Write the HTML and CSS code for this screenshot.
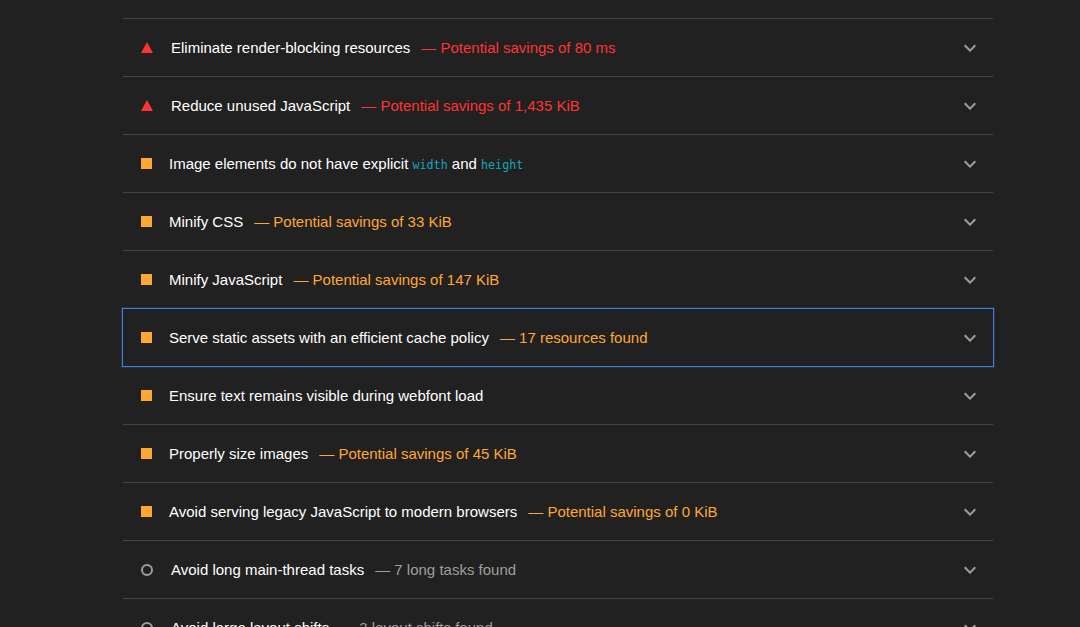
FILE: index.html
```html
<!DOCTYPE html>
<html>
<head>
<meta charset="utf-8">
<link rel="stylesheet" href="styles.css">
</head>
<body>
<div class="page">
  <div class="list">
    <div class="audit">
      <span class="icon tri"></span>
      <span class="title">Eliminate render-blocking resources</span>
      <span class="disp fail">— Potential savings of 80 ms</span>
      <svg class="chev" viewBox="0 0 24 24"><path d="M7.41 8.59L12 13.17l4.59-4.58L18 10l-6 6-6-6 1.41-1.41z"/></svg>
    </div>
    <div class="audit">
      <span class="icon tri"></span>
      <span class="title">Reduce unused JavaScript</span>
      <span class="disp fail">— Potential savings of 1,435 KiB</span>
      <svg class="chev" viewBox="0 0 24 24"><path d="M7.41 8.59L12 13.17l4.59-4.58L18 10l-6 6-6-6 1.41-1.41z"/></svg>
    </div>
    <div class="audit">
      <span class="icon sq"></span>
      <span class="title">Image elements do not have explicit <code>width</code> and <code>height</code></span>
      <svg class="chev" viewBox="0 0 24 24"><path d="M7.41 8.59L12 13.17l4.59-4.58L18 10l-6 6-6-6 1.41-1.41z"/></svg>
    </div>
    <div class="audit">
      <span class="icon sq"></span>
      <span class="title">Minify CSS</span>
      <span class="disp avg">— Potential savings of 33 KiB</span>
      <svg class="chev" viewBox="0 0 24 24"><path d="M7.41 8.59L12 13.17l4.59-4.58L18 10l-6 6-6-6 1.41-1.41z"/></svg>
    </div>
    <div class="audit">
      <span class="icon sq"></span>
      <span class="title">Minify JavaScript</span>
      <span class="disp avg">— Potential savings of 147 KiB</span>
      <svg class="chev" viewBox="0 0 24 24"><path d="M7.41 8.59L12 13.17l4.59-4.58L18 10l-6 6-6-6 1.41-1.41z"/></svg>
    </div>
    <div class="audit focused">
      <span class="icon sq"></span>
      <span class="title">Serve static assets with an efficient cache policy</span>
      <span class="disp avg">— 17 resources found</span>
      <svg class="chev" viewBox="0 0 24 24"><path d="M7.41 8.59L12 13.17l4.59-4.58L18 10l-6 6-6-6 1.41-1.41z"/></svg>
    </div>
    <div class="audit">
      <span class="icon sq"></span>
      <span class="title">Ensure text remains visible during webfont load</span>
      <svg class="chev" viewBox="0 0 24 24"><path d="M7.41 8.59L12 13.17l4.59-4.58L18 10l-6 6-6-6 1.41-1.41z"/></svg>
    </div>
    <div class="audit">
      <span class="icon sq"></span>
      <span class="title">Properly size images</span>
      <span class="disp avg">— Potential savings of 45 KiB</span>
      <svg class="chev" viewBox="0 0 24 24"><path d="M7.41 8.59L12 13.17l4.59-4.58L18 10l-6 6-6-6 1.41-1.41z"/></svg>
    </div>
    <div class="audit">
      <span class="icon sq"></span>
      <span class="title">Avoid serving legacy JavaScript to modern browsers</span>
      <span class="disp avg">— Potential savings of 0 KiB</span>
      <svg class="chev" viewBox="0 0 24 24"><path d="M7.41 8.59L12 13.17l4.59-4.58L18 10l-6 6-6-6 1.41-1.41z"/></svg>
    </div>
    <div class="audit">
      <span class="icon circ"></span>
      <span class="title">Avoid long main-thread tasks</span>
      <span class="disp info">— 7 long tasks found</span>
      <svg class="chev" viewBox="0 0 24 24"><path d="M7.41 8.59L12 13.17l4.59-4.58L18 10l-6 6-6-6 1.41-1.41z"/></svg>
    </div>
    <div class="audit">
      <span class="icon circ"></span>
      <span class="title">Avoid large layout shifts</span>
      <span class="disp info">— 3 layout shifts found</span>
      <svg class="chev" viewBox="0 0 24 24"><path d="M7.41 8.59L12 13.17l4.59-4.58L18 10l-6 6-6-6 1.41-1.41z"/></svg>
    </div>
  </div>
</div>
</body>
</html>
```

FILE: styles.css
```css
html, body {
  margin: 0;
  padding: 0;
  background: #212121;
  height: 100%;
  overflow: hidden;
}
.page {
  padding: 18px 0 0 123px;
  font-family: "Liberation Sans", Arial, sans-serif;
  font-size: 15px;
  color: #fff;
}
.list {
  width: 870px;
}
.audit {
  height: 57px;
  border-top: 1px solid #444;
  display: flex;
  align-items: center;
  padding-left: 18px;
  padding-right: 11px;
  white-space: nowrap;
}
.audit.focused {
  position: relative;
}
.audit.focused::after {
  content: "";
  position: absolute;
  top: -1px;
  left: -1px;
  right: -1px;
  bottom: -1px;
  border: 1px solid #3c7fe6;
  box-shadow: 0 0 0 1px #2b3340;
  pointer-events: none;
}
.icon {
  flex: none;
  display: inline-block;
}
.tri {
  width: 0;
  height: 0;
  border-left: 6px solid transparent;
  border-right: 6px solid transparent;
  border-bottom: 11px solid #f33;
  margin-right: 18px;
  margin-top: -1px;
}
.sq {
  width: 11px;
  height: 11px;
  background: #ffa733;
  margin-right: 17px;
}
.circ {
  width: 8px;
  height: 8px;
  border: 2px solid #9e9e9e;
  border-radius: 50%;
  margin-right: 18px;
}
.title {
  color: #fff;
}
code {
  font-family: "DejaVu Sans Mono", monospace;
  font-size: 11.7px;
  color: #12a5bd;
}
.disp {
  margin-left: 11px;
}
.fail { color: #f33; }
.avg { color: #ffa733; }
.info { color: #9e9e9e; }
.chev {
  width: 24px;
  height: 24px;
  margin-left: auto;
  fill: #9e9e9e;
  flex: none;
}
```
